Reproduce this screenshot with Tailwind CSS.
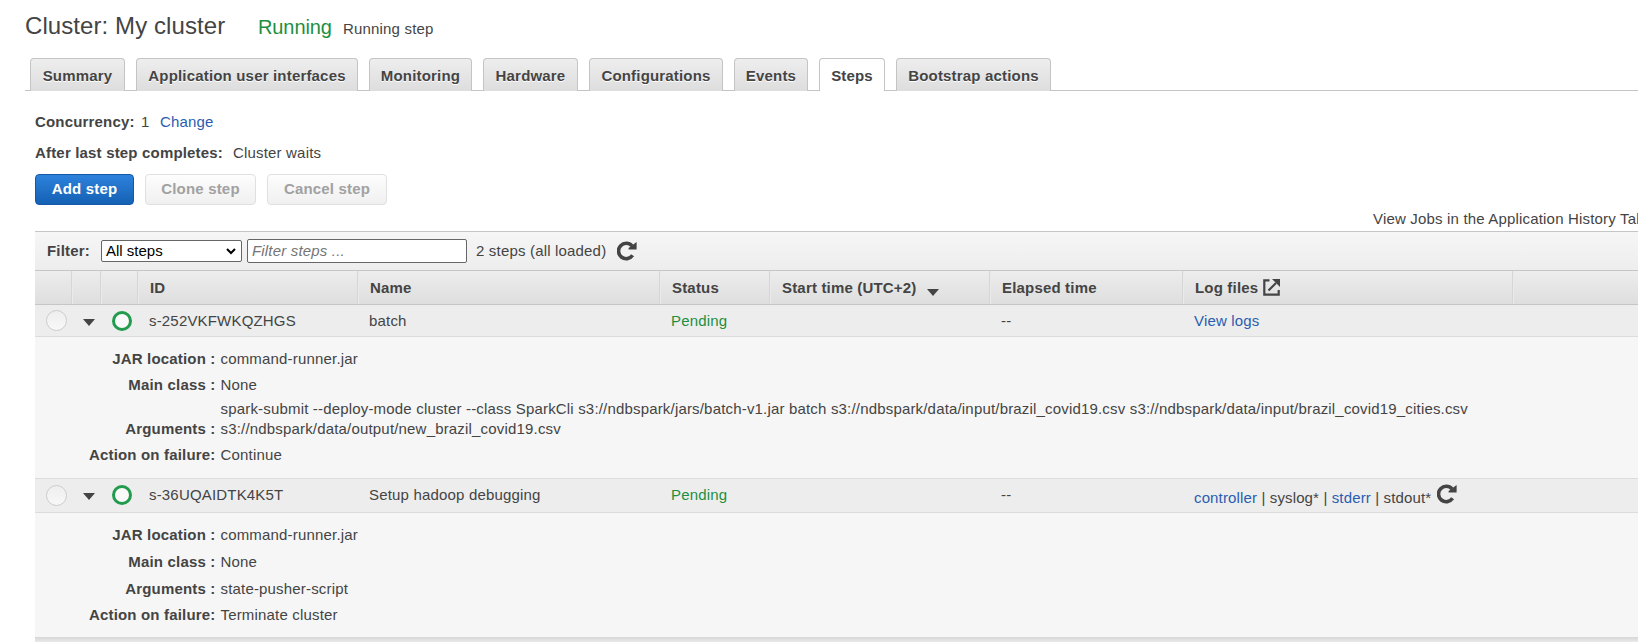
<!DOCTYPE html>
<html lang="en">
<head>
<meta charset="utf-8">
<title>Cluster: My cluster</title>
<script src="https://cdn.jsdelivr.net/npm/@tailwindcss/browser@4"></script>
</head>
<body class="h-[642px] w-[1638px] overflow-hidden bg-white font-['Liberation_Sans',Arial,sans-serif] text-[15px] leading-[20px] tracking-[0.178px] text-[#444]">
<svg class="hidden">
  <symbol id="reload" viewBox="0 0 20 20"><path d="M15.6 14.3A7.7 7.7 0 1 1 15 4.9" fill="none" stroke="#444" stroke-width="3.6"/><path d="M19.6 1V8.6H11.6V7Z" fill="#444"/></symbol>
</svg>
<header class="flex h-[58px] items-baseline pl-[25px] pt-[11px] whitespace-nowrap">
  <h1 class="w-[233px] text-[24px] leading-[30px] tracking-[0.08px]">Cluster: My cluster</h1>
  <span class="w-[85px] text-[20px] tracking-[-0.1px] text-[#1d8f41]">Running</span>
  <span>Running step</span>
</header>
<nav class="ml-[25px] flex h-[33px] gap-[11px] border-b border-[#c4c4c4] pl-[5px] text-center font-bold whitespace-nowrap text-shadow-[0_1px_0_#fff] *:h-[33px] *:rounded-t-[4px] *:border *:border-b-0 *:border-[#c4c4c4] *:pt-[7px]">
  <a class="w-[95px] bg-linear-to-b from-[#eee] to-[#ddd]">Summary</a>
  <a class="w-[222px] bg-linear-to-b from-[#eee] to-[#ddd]">Application user interfaces</a>
  <a class="w-[103px] bg-linear-to-b from-[#eee] to-[#ddd]">Monitoring</a>
  <a class="w-[95px] bg-linear-to-b from-[#eee] to-[#ddd]">Hardware</a>
  <a class="w-[134px] bg-linear-to-b from-[#eee] to-[#ddd]">Configurations</a>
  <a class="w-[74px] bg-linear-to-b from-[#eee] to-[#ddd]">Events</a>
  <a class="w-[66px] bg-white">Steps</a>
  <a class="w-[155px] bg-linear-to-b from-[#eee] to-[#ddd]">Bootstrap actions</a>
</nav>
<main class="pl-[35px]">
  <div class="flex h-[46px] items-end pb-[5px]"><b class="w-[106px]">Concurrency:</b><span class="w-[19px]">1</span><a class="text-[#2a5db0]">Change</a></div>
  <div class="flex h-[37px] pt-[6px]"><b class="w-[198px]">After last step completes:</b><span>Cluster waits</span></div>
  <div class="flex h-[31px] gap-[11px] text-center font-bold *:h-[31px] *:rounded-[4px] *:border *:pb-[2px]">
    <button class="w-[99px] border-[#1459a8] bg-linear-to-b from-[#2d82dc] to-[#1461b4] text-white">Add step</button>
    <button class="w-[111px] border-[#e0e0e0] bg-linear-to-b from-[#fdfdfd] to-[#f0f0f0] text-[#a1a1a1]">Clone step</button>
    <button class="w-[120px] border-[#e0e0e0] bg-linear-to-b from-[#fdfdfd] to-[#f0f0f0] text-[#a1a1a1]">Cancel step</button>
  </div>
  <div class="h-[26px] overflow-hidden pl-[1338px] pt-[4px] whitespace-nowrap">View Jobs in the Application History Tab</div>

  <section class="bg-[#f6f6f6]">
    <div class="flex h-[39px] items-center border-t border-[#c6c6c6] bg-linear-to-b from-[#f6f6f6] to-[#ededed] pl-[12px] whitespace-nowrap">
      <b class="w-[54px]">Filter:</b>
      <div class="flex h-[22px] w-[141px] items-center justify-between rounded-[2px] border border-[#666] bg-white pl-[4px] pr-[5px] tracking-normal text-black">All steps
        <svg class="h-[7px] w-[10px]" viewBox="0 0 10 7"><path d="M1 1l4 4 4-4" fill="none" stroke="#000" stroke-width="2"/></svg>
      </div>
      <input class="ml-[5px] h-[24px] w-[220px] rounded-[2px] border border-[#666] bg-white pb-[1px] pl-[4px] italic placeholder:text-[#757575]" placeholder="Filter steps ...">
      <span class="ml-[9px] w-[141px]">2 steps (all loaded)</span>
      <svg class="size-[20px]"><use href="#reload"/></svg>
    </div>

    <div class="grid h-[35px] grid-cols-[37px_29px_37px_220px_302px_110px_220px_193px_330px_125px] border-y border-[#c6c6c6] bg-linear-to-b from-[#ededed] to-[#dedede] font-bold whitespace-nowrap *:border-r *:border-[#d6d6d6] *:pl-[12px] *:pt-[7px] *:shadow-[1px_0_0_#eaeaea] *:last:border-r-0">
      <i></i><i></i><i></i>
      <div>ID</div><div>Name</div><div>Status</div>
      <div class="flex">Start time (UTC+2)<svg class="ml-[11px] mt-[11px] h-[7px] w-[12px]" viewBox="0 0 12 7"><path d="M0 0h12L6 7z" fill="#444"/></svg></div>
      <div>Elapsed time</div>
      <div class="flex">Log files<svg class="ml-[5px] mt-[1px] size-[17px]" viewBox="0 0 17 17"><path d="M6.5 1.3H1.3V15.7H15.7V11M5.5 11.5L13 4" fill="none" stroke="#444" stroke-width="2.2"/><path d="M9 0h8v8z" fill="#444"/></svg></div>
      <div></div>
    </div>

    <div class="grid h-[32px] grid-cols-[37px_29px_37px_220px_302px_110px_220px_193px_330px_125px] border-b border-[#dcdcdc] bg-[#ededed] whitespace-nowrap *:pl-[11px] *:pt-[6px]">
      <div class="!pt-[5px]"><i class="block size-[21px] rounded-full border border-[#ccc] bg-linear-to-b from-[#eee] to-[#f8f8f8]"></i></div>
      <div class="!pt-[14px]"><svg class="h-[7px] w-[12px]" viewBox="0 0 12 7"><path d="M0 0h12L6 7z" fill="#444"/></svg></div>
      <div><i class="block size-[20px] rounded-full border-[3px] border-[#219b4c] bg-[#fafafa]"></i></div>
      <div>s-252VKFWKQZHGS</div><div>batch</div><div class="text-[#1d8f41]">Pending</div><div></div><div>--</div><div class="text-[#2a5db0]">View logs</div><div></div>
    </div>
    <div class="grid h-[141px] grid-cols-[180.5px_1fr] content-start gap-x-[5px] pt-[12px]">
      <b class="h-[26px] text-right">JAR location :</b><span>command-runner.jar</span>
      <b class="h-[24px] text-right">Main class :</b><span>None</span>
      <b class="h-[46px] pt-[20px] text-right">Arguments :</b><span class="whitespace-nowrap">spark-submit --deploy-mode cluster --class SparkCli s3://ndbspark/jars/batch-v1.jar batch s3://ndbspark/data/input/brazil_covid19.csv s3://ndbspark/data/input/brazil_covid19_cities.csv<br>s3://ndbspark/data/output/new_brazil_covid19.csv</span>
      <b class="text-right">Action on failure:</b><span>Continue</span>
    </div>

    <div class="grid h-[35px] grid-cols-[37px_29px_37px_220px_302px_110px_220px_193px_330px_125px] border-y border-[#dcdcdc] bg-[#ededed] whitespace-nowrap *:pl-[11px] *:pt-[6px]">
      <div><i class="block size-[21px] rounded-full border border-[#ccc] bg-linear-to-b from-[#eee] to-[#f8f8f8]"></i></div>
      <div class="!pt-[14px]"><svg class="h-[7px] w-[12px]" viewBox="0 0 12 7"><path d="M0 0h12L6 7z" fill="#444"/></svg></div>
      <div><i class="block size-[20px] rounded-full border-[3px] border-[#219b4c] bg-[#fafafa]"></i></div>
      <div>s-36UQAIDTK4K5T</div><div>Setup hadoop debugging</div><div class="text-[#1d8f41]">Pending</div><div></div><div>--</div>
      <div class="flex"><span class="w-[243px] pt-[3px] tracking-[0.14px]"><a class="text-[#2a5db0]">controller</a> | syslog* | <a class="text-[#2a5db0]">stderr</a> | stdout*</span><svg class="-mt-[1px] size-[20px]"><use href="#reload"/></svg></div><div></div>
    </div>
    <div class="grid h-[124px] grid-cols-[180.5px_1fr] content-start gap-x-[5px] pt-[12px]">
      <b class="h-[27px] text-right">JAR location :</b><span>command-runner.jar</span>
      <b class="h-[27px] text-right">Main class :</b><span>None</span>
      <b class="h-[26px] text-right">Arguments :</b><span>state-pusher-script</span>
      <b class="text-right">Action on failure:</b><span>Terminate cluster</span>
    </div>
    <div class="h-[6px] bg-linear-to-b from-[#d6d6d6] to-[#eee]"></div>
  </section>
</main>
</body>
</html>
